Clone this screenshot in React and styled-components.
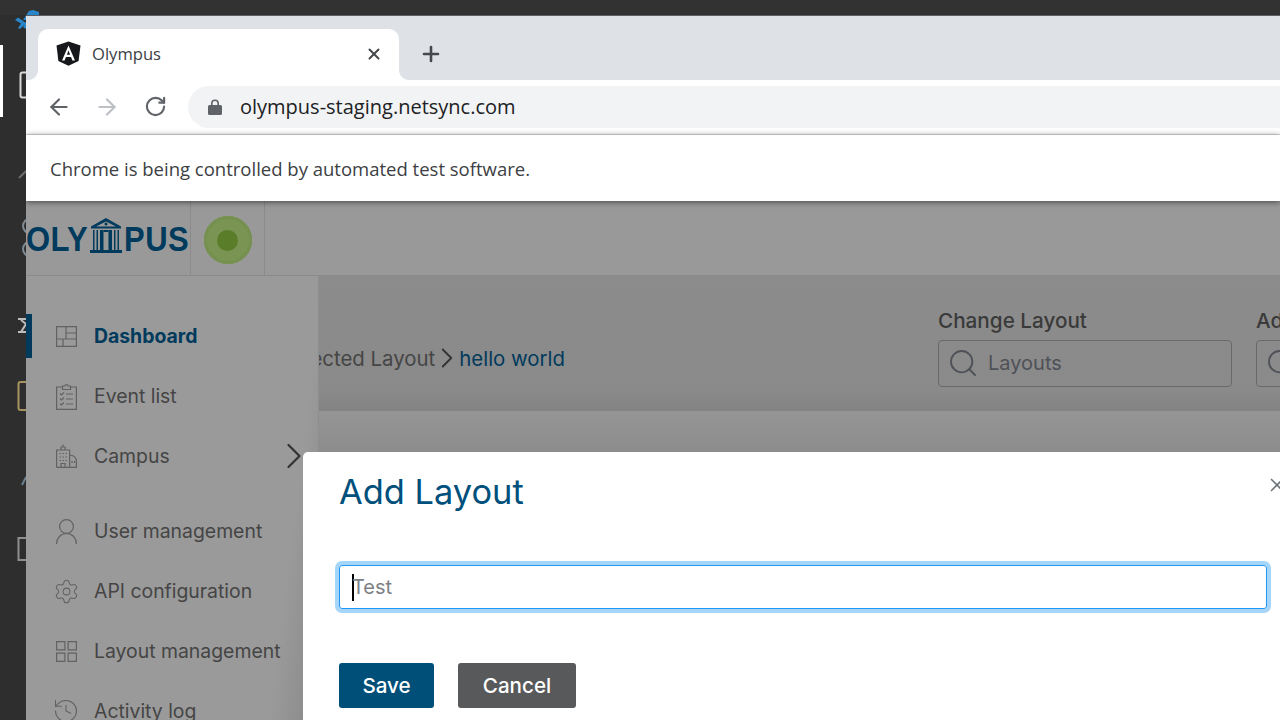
import React from 'react'
import styled, { createGlobalStyle } from 'styled-components'
import { ArrowLeft, ArrowRight, RotateCw, Plus, X, ChevronRight, Search, Settings, History } from 'lucide-react'

const GlobalStyle = createGlobalStyle`
    html, body {
        margin: 0;
        height: 100%;
        overflow: hidden;
    }
    * {
        box-sizing: border-box;
    }
`

const APP_FONT = `Inter, "Open Sans", sans-serif`
const CHROME_FONT = `"Open Sans", "Noto Sans", sans-serif`

const Desktop = styled.div`
    position: relative;
    width: 1280px;
    height: 720px;
    overflow: hidden;
    background-color: #2e2e2e;
    display: grid;
    grid-template-columns: 26px 1fr;
    grid-template-rows: 15px 1fr;
`

const TitleBar = styled.div`
    grid-column: 1 / 3;
    background-color: #323232;
`

const Window = styled.div`
    position: relative;
    min-width: 0;
    display: flex;
    flex-direction: column;
    overflow: hidden;
    border-top: 1px solid #5c5f63;
`

const TabStrip = styled.div`
    height: 64px;
    flex: none;
    background-color: #dee1e6;
    display: flex;
    align-items: flex-end;
    padding-left: 12px;
`

const Tab = styled.div`
    position: relative;
    width: 361px;
    height: 51px;
    background-color: #fff;
    border-radius: 10px 10px 0 0;
    display: flex;
    align-items: center;
    padding: 0 16px 2px 18px;
    font: 400 16.6px ${CHROME_FONT};
    color: #3c4043;

    &::before,
    &::after {
        content: '';
        position: absolute;
        bottom: 0;
        width: 10px;
        height: 10px;
    }

    &::before {
        left: -10px;
        background: radial-gradient(circle at 0 0, #dee1e6 9.5px, #fff 10.5px);
    }

    &::after {
        right: -10px;
        background: radial-gradient(circle at 100% 0, #dee1e6 9.5px, #fff 10.5px);
    }
`

const TabTitle = styled.span`
    margin-left: 11px;
    flex: 1;
`

const NewTab = styled.div`
    margin: 0 0 13px 20px;
    height: 26px;
    display: flex;
    align-items: center;
    color: #45484c;
`

const Toolbar = styled.div`
    height: 55px;
    flex: none;
    background-color: #fff;
    border-bottom: 1px solid #dadce0;
    display: flex;
    align-items: center;
    padding: 0 0 1px 19px;
    gap: 20px;
`

const NavIcon = styled.div`
    width: 28px;
    display: flex;
    justify-content: center;
    color: ${({ disabled }) => disabled ? '#bdc1c6' : '#5f6368'};
`

const UrlBar = styled.div`
    flex: 1;
    height: 42px;
    margin-left: -1px;
    border-radius: 21px 0 0 21px;
    background-color: #f1f3f4;
    display: flex;
    align-items: center;
    padding-left: 20px;
    font: 400 20px ${CHROME_FONT};
    color: #202124;
`

const UrlText = styled.span`
    margin-left: 18px;
`

const InfoBar = styled.div`
    height: 66px;
    flex: none;
    background-color: #fff;
    display: flex;
    align-items: center;
    padding-left: 24px;
    font: 400 18.5px ${CHROME_FONT};
    color: #3c4043;
    position: relative;
    z-index: 3;
    box-shadow: 0 1px 6px rgba(0, 0, 0, 0.55);
`

const Page = styled.div`
    flex: 1;
    min-height: 0;
    display: flex;
    flex-direction: column;
    background-color: #9a9a9a;
    font-family: ${APP_FONT};
`

const Header = styled.div`
    height: 75px;
    flex: none;
    display: flex;
    background-color: #999;
    border-bottom: 1px solid #8a8a8a;
`

const LogoCell = styled.div`
    width: 165px;
    border-right: 1px solid #8b8b8b;
    display: flex;
    align-items: flex-end;
    padding: 0 0 21px 0;
    overflow: hidden;
    color: #003a5c;
`

const LogoText = styled.span`
    font: 700 31px/26px "Liberation Sans", sans-serif;
    letter-spacing: 0.4px;
    transform: scaleY(1.13);
    transform-origin: bottom;
`

const StatusCell = styled.div`
    width: 74px;
    border-right: 1px solid #8b8b8b;
    display: flex;
    align-items: center;
    justify-content: center;
    padding-top: 4px;
`

const StatusDot = styled.div`
    width: 48px;
    height: 48px;
    border-radius: 50%;
    background-color: #7a9454;
    box-shadow: inset 0 0 0 3px #75904f;
    display: flex;
    align-items: center;
    justify-content: center;

    &::after {
        content: '';
        width: 21px;
        height: 21px;
        border-radius: 50%;
        background-color: #5a7d29;
    }
`

const Body = styled.div`
    flex: 1;
    min-height: 0;
    display: flex;
`

const Sidebar = styled.nav`
    width: 293px;
    flex: none;
    padding-top: 30px;
    background: linear-gradient(97deg, #9a9a9a 86%, #888 100%);
    border-right: 1px solid #8d8d8d;
    display: flex;
    flex-direction: column;
    font-size: 19.4px;
    color: #454545;
`

const NavRow = styled.div`
    height: 60px;
    flex: none;
    position: relative;
    display: flex;
    align-items: center;
    padding-left: 29px;
    gap: 17px;
    margin-bottom: ${({ $gap }) => $gap || 0}px;
    font-weight: ${({ $active }) => $active ? 700 : 400};
    color: ${({ $active }) => $active ? '#003a5c' : '#454545'};

    &::before {
        content: ${({ $active }) => $active ? "''" : 'none'};
        position: absolute;
        left: 0;
        top: 8px;
        width: 6px;
        height: 44px;
        background-color: #003a5c;
    }
`

const NavLabel = styled.span`
    flex: 1;
    white-space: nowrap;
`

const NavArrow = styled.div`
    width: 14px;
    margin-right: 17px;
    display: flex;
    justify-content: center;
    color: #333;

    svg {
        flex: none;
    }
`

const IconSlot = styled.div`
    width: 22px;
    height: 24px;
    flex: none;
    display: flex;
    align-items: center;
    justify-content: center;
    color: #626262;

    svg {
        flex: none;
    }
`

const Main = styled.main`
    flex: 1;
    min-width: 0;
    display: flex;
    flex-direction: column;
    background-color: #8e8e8e;
`

const TopBand = styled.div`
    height: 135px;
    flex: none;
    background: linear-gradient(to bottom, #8c8c8c 0, #8a8a8a 85%, #838383 100%);
    display: flex;
`

const Crumbs = styled.div`
    width: 619px;
    height: 32px;
    flex: none;
    margin-top: 66px;
    padding-right: 373px;
    display: flex;
    align-items: center;
    justify-content: flex-end;
    overflow: hidden;
    white-space: nowrap;
    font-size: 20.4px;
    color: #454545;
`

const CrumbCurrent = styled.span`
    color: #003a5c;
`

const CrumbArrow = styled.span`
    display: flex;
    align-items: center;
    justify-content: center;
    width: 24px;
    color: #333;

    svg {
        flex: none;
    }
`

const Picker = styled.div`
    width: 294px;
    flex: none;
    margin-right: 24px;
    padding-top: 32px;
`

const PickerLabel = styled.div`
    height: 32px;
    font-size: 20.7px;
    font-weight: 500;
    line-height: 25px;
    color: #3a3a3a;
    white-space: nowrap;
`

const PickerInput = styled.div`
    height: 47px;
    border: 1px solid #696969;
    border-radius: 4px;
    display: flex;
    align-items: center;
    padding: 0 0 1px 8px;
    gap: 9px;
    font-size: 20px;
    color: #4e5157;

    svg {
        flex: none;
    }
`

const LowerBand = styled.div`
    flex: 1;
    background: linear-gradient(to bottom, #959595 0, #8c8c8c 42px);
`

const Modal = styled.div`
    position: absolute;
    left: 277px;
    top: 436px;
    width: 1000px;
    height: 300px;
    background-color: #fff;
    border-radius: 5px 0 0 0;
    padding: 17px 0 0 36px;
    font-family: ${APP_FONT};
    z-index: 4;
`

const ModalTitle = styled.h2`
    margin: 0;
    font-size: 34.4px;
    font-weight: 400;
    line-height: 46px;
    color: #00507c;
`

const ModalClose = styled.div`
    position: absolute;
    top: 22px;
    left: 963px;
    color: #70757a;
    display: flex;
`

const NameField = styled.div`
    width: 928px;
    height: 44px;
    margin-top: 50px;
    border: 1px solid #2196f3;
    border-radius: 3px;
    box-shadow: 0 0 0 4px #a6d5fa;
    display: flex;
    align-items: center;
    padding-left: 12px;
    font-size: 20px;
    color: #7d8186;
`

const Caret = styled.span`
    width: 2px;
    height: 27px;
    margin-right: -2px;
    background-color: #000;
`

const Actions = styled.div`
    display: flex;
    gap: 24px;
    margin-top: 54px;
`

const Button = styled.div`
    height: 45px;
    width: ${({ $width }) => $width}px;
    border-radius: 3px;
    background-color: ${({ $bg }) => $bg};
    color: #fff;
    font-size: 20.6px;
    font-weight: 500;
    display: flex;
    align-items: center;
    justify-content: center;
`

// the bits of the editor behind the browser window
const EditorStrip = () => (
    <svg width="26" height="705" viewBox="0 15 26 705" fill="none">
        <rect x="0" y="45" width="3" height="72" fill="#fff" />
        <rect x="20.5" y="72.5" width="10" height="25" rx="2" stroke="#d8d8d8" strokeWidth="2" />
        <path d="M19 178l7-7" stroke="#6e6e6e" strokeWidth="2" />
        <circle cx="30" cy="226" r="7" stroke="#7f8a93" strokeWidth="2" />
        <circle cx="30" cy="249" r="7" stroke="#7f8a93" strokeWidth="2" />
        <path d="M18 319h8M18 332h8M21 320l5 4-5 8" stroke="#bdbdbd" strokeWidth="2" />
        <rect x="18.5" y="382" width="14" height="28" rx="2" stroke="#a6935f" strokeWidth="2" />
        <path d="M22 485l4-8" stroke="#6e7f8c" strokeWidth="2" />
        <rect x="18.5" y="538" width="14" height="22" stroke="#8e8e8e" strokeWidth="2" />
    </svg>
)

const VsLogo = styled.svg`
    position: absolute;
    left: 15px;
    top: 10px;
`

const ShieldLogo = () => (
    <svg width="25" height="25" viewBox="0 0 25 25">
        <path d="M12.5 0.5L24.5 4.5L22.6 20L12.5 24.8L2.4 20L0.5 4.5Z" fill="#16181c" />
        <path d="M12.5 4.5L6 19.5H8.6L10 16H15L16.4 19.5H19ZM10.9 13.8L12.5 9.6L14.1 13.8Z" fill="#fff" />
    </svg>
)

const SolidLock = () => (
    <svg width="14" height="16" viewBox="0 0 14 16" fill="#5f6368">
        <path d="M3 6V4.500a4 4 0 018 0V6h1.500A1.500 1.500 0 0114 7.500v7a1.500 1.500 0 01-1.500 1.500h-11A1.500 1.500 0 010 14.500v-7A1.500 1.500 0 011.500 6ZM4.600 6h4.800V4.500a2.400 2.400 0 00-4.800 0Z" />
    </svg>
)

const TempleMark = () => (
    <svg width="34" height="36" viewBox="0 0 34 36" fill="#003a5c" style={{ flex: 'none', margin: '0 1px' }}>
        <path d="M17 0L32 8.500V10.500H2V8.500ZM17 3.500L7 8.500H27ZM17 4.500a1.500 1.500 0 100 3 1.500 1.500 0 000-3Z" fillRule="evenodd" />
        <path d="M4 12h1.500v20H4zM7.500 12h1.500v20H7.500zM11 12h3.500v20H11zM19.500 12H23v20h-3.500zM25 12h1.500v20H25zM28.500 12H30v20h-1.500z" />
        <path d="M14.500 12h5v2h-5zM1 32h32v3H1z" />
    </svg>
)

const strokeIcon = { fill: 'none', stroke: 'currentColor', strokeWidth: 1.2 }

const DashboardIcon = () => (
    <svg width="21" height="21" viewBox="0 0 21 21" {...strokeIcon}>
        <path d="M.6.6h19.800v19.800H.6zM10 .6V13M.6 13h19.800M10 7h10.400M7 13v7.400" />
    </svg>
)

const ClipboardIcon = () => (
    <svg width="21" height="28" viewBox="0 0 21 28" {...strokeIcon}>
        <path d="M6.500 5H.6v22.400h19.800V5H14.500M6.500 7.500V4h2.500a1.500 1.500 0 013 0h2.500v3.500zM10 12h7M10 17h7M10 22h7" />
        <path d="M4 11.500l1.500 1.500 2.500-2.500M4 16.500L5.500 18l2.500-2.500M4 21.500L5.500 23l2.500-2.500" />
    </svg>
)

const BuildingIcon = () => (
    <svg width="21" height="24" viewBox="0 0 21 24" {...strokeIcon}>
        <path d="M.6 23.400V6h13v17.400M14 11c4 .5 6.400 3 6.400 6.500v5.900H.6M5 6V3h4v3M7 3V.6" />
        <path d="M3.500 9.500h1.500M6.500 9.500H8M9.500 9.500H11M3.500 13h1.500M6.500 13H8M9.500 13H11M3.500 16.500h1.500M6.500 16.500H8M9.500 16.500H11M5 23v-3.500h4V23M16 17v2M18.500 17v2" />
    </svg>
)

const PersonIcon = () => (
    <svg width="21" height="25" viewBox="0 0 21 25" {...strokeIcon}>
        <circle cx="10.500" cy="7.500" r="6.900" />
        <path d="M.6 25c0-6 4-10.500 9.900-10.500s9.900 4.500 9.900 10.500" />
    </svg>
)

const GridIcon = () => (
    <svg width="21" height="21" viewBox="0 0 21 21" {...strokeIcon}>
        <path d="M.6.6h8.300v8.300H.6zM12.100.6h8.300v8.300h-8.300zM.6 12.100h8.300v8.300H.6zM12.100 12.100h8.300v8.300h-8.300z" />
    </svg>
)

const navItems = [
    { label: 'Dashboard', icon: <DashboardIcon />, active: true },
    { label: 'Event list', icon: <ClipboardIcon /> },
    { label: 'Campus', icon: <BuildingIcon />, arrow: true, gap: 15 },
    { label: 'User management', icon: <PersonIcon /> },
    { label: 'API configuration', icon: <Settings size={27} strokeWidth={0.9} /> },
    { label: 'Layout management', icon: <GridIcon /> },
    { label: 'Activity log', icon: <History size={28} strokeWidth={0.9} /> }
]

const App = () => (
    <>
        <GlobalStyle />
        <Desktop>
            <VsLogo width="24" height="19" viewBox="0 0 24 19">
                <path d="M0 10l3-2.500 8 5.500-6 6-2-1 3-4.500ZM8 10l6-9 4-1 6 2v8H14ZM8 17l3-5 3 4-3 3Z" fill="#2a86c8" />
            </VsLogo>
            <TitleBar />
            <EditorStrip />
            <Window>
                <TabStrip>
                    <Tab>
                        <ShieldLogo />
                        <TabTitle>Olympus</TabTitle>
                        <X size={18} strokeWidth={2.6} color="#45484c" />
                    </Tab>
                    <NewTab>
                        <Plus size={24} strokeWidth={2.6} />
                    </NewTab>
                </TabStrip>
                <Toolbar>
                    <NavIcon><ArrowLeft size={26} strokeWidth={2} /></NavIcon>
                    <NavIcon disabled><ArrowRight size={26} strokeWidth={2} /></NavIcon>
                    <NavIcon><RotateCw size={23} strokeWidth={2.2} /></NavIcon>
                    <UrlBar>
                        <SolidLock />
                        <UrlText>olympus-staging.netsync.com</UrlText>
                    </UrlBar>
                </Toolbar>
                <InfoBar>Chrome is being controlled by automated test software.</InfoBar>
                <Page>
                    <Header>
                        <LogoCell>
                            <LogoText>OLY</LogoText>
                            <TempleMark />
                            <LogoText>PUS</LogoText>
                        </LogoCell>
                        <StatusCell><StatusDot /></StatusCell>
                    </Header>
                    <Body>
                        <Sidebar>
                            {navItems.map(item => (
                                <NavRow key={item.label} $active={item.active} $gap={item.gap}>
                                    <IconSlot>{item.icon}</IconSlot>
                                    <NavLabel>{item.label}</NavLabel>
                                    {item.arrow && <NavArrow><ChevronRight size={44} strokeWidth={1.2} /></NavArrow>}
                                </NavRow>
                            ))}
                        </Sidebar>
                        <Main>
                            <TopBand>
                                <Crumbs>
                                    <span>Selected Layout</span>
                                    <CrumbArrow><ChevronRight size={34} strokeWidth={1.3} /></CrumbArrow>
                                    <CrumbCurrent>hello world</CrumbCurrent>
                                </Crumbs>
                                <Picker>
                                    <PickerLabel>Change Layout</PickerLabel>
                                    <PickerInput>
                                        <Search size={32} strokeWidth={1.4} />
                                        Layouts
                                    </PickerInput>
                                </Picker>
                                <Picker>
                                    <PickerLabel>Add Widget</PickerLabel>
                                    <PickerInput>
                                        <Search size={32} strokeWidth={1.4} />
                                    </PickerInput>
                                </Picker>
                            </TopBand>
                            <LowerBand />
                        </Main>
                    </Body>
                </Page>
                <Modal>
                    <ModalTitle>Add Layout</ModalTitle>
                    <ModalClose><X size={22} strokeWidth={1.8} /></ModalClose>
                    <NameField>
                        <Caret />
                        Test
                    </NameField>
                    <Actions>
                        <Button $bg="#004f78" $width={95}>Save</Button>
                        <Button $bg="#58595b" $width={118}>Cancel</Button>
                    </Actions>
                </Modal>
            </Window>
        </Desktop>
    </>
)

export default App
